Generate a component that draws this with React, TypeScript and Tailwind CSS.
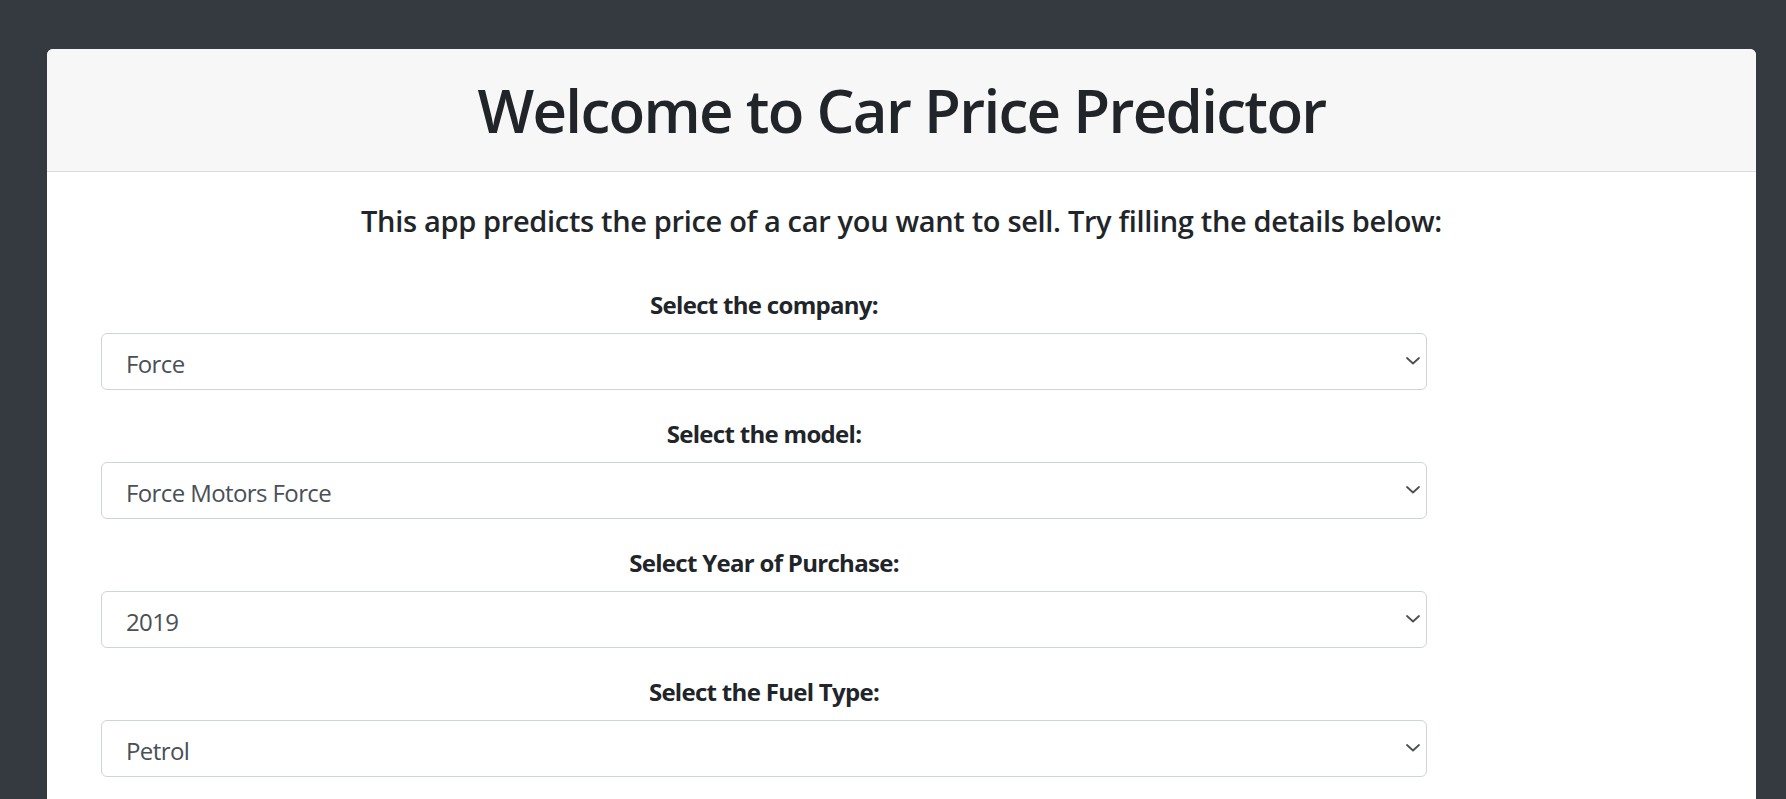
import React from "react";

const Chevron = () => (
  <svg width="14" height="8" viewBox="0 0 14 8" className="absolute right-[6px] top-1/2 -translate-y-1/2 pointer-events-none">
    <path d="M1 1 L7 6.5 L13 1" fill="none" stroke="#4b4f55" strokeWidth="1.8" strokeLinecap="round" strokeLinejoin="round" />
  </svg>
);

const Field = ({ label, value }: { label: string; value: string }) => (
  <div className="flex flex-col items-center">
    <div className="h-[36px] pt-[2px] leading-[34px] text-[24px] font-bold text-[#212529] tracking-[-0.7px]">{label}</div>
    <div className="relative mt-[11px] w-full h-[57px] rounded-[6px] border border-[#ced4da] bg-white flex items-center pl-[24px] pt-[5px] text-[24px] text-[#495057] tracking-[-0.6px]">
      {value}
      <Chevron />
    </div>
  </div>
);

export default function App() {
  return (
    <div
      className="min-h-screen bg-[#343a40] pt-[49px] pl-[47px] pr-[30px] overflow-hidden"
      style={{ fontFamily: '"Open Sans", "Noto Sans", sans-serif' }}
    >
      <div className="bg-white rounded-t-[6px] h-[800px]">
        <div className="h-[123px] bg-[#f7f7f7] border-b border-[#dcdcdc] rounded-t-[6px] flex items-center justify-center">
          <h1 className="text-[60px] leading-[1.2] font-semibold text-[#212529] tracking-[-1.7px] mt-[-1px]">
            Welcome to Car Price Predictor
          </h1>
        </div>
        <div className="pt-[32px]">
          <div className="text-center text-[29px] leading-[1.2] font-semibold text-[#212529] tracking-[-0.33px]">
            This app predicts the price of a car you want to sell. Try filling the details below:
          </div>
          <div className="pl-[54px] mt-[47px]">
            <div className="w-[1326px] flex flex-col gap-[25px]">
              <Field label="Select the company:" value="Force" />
              <Field label="Select the model:" value="Force Motors Force" />
              <Field label="Select Year of Purchase:" value="2019" />
              <Field label="Select the Fuel Type:" value="Petrol" />
            </div>
          </div>
        </div>
      </div>
    </div>
  );
}
